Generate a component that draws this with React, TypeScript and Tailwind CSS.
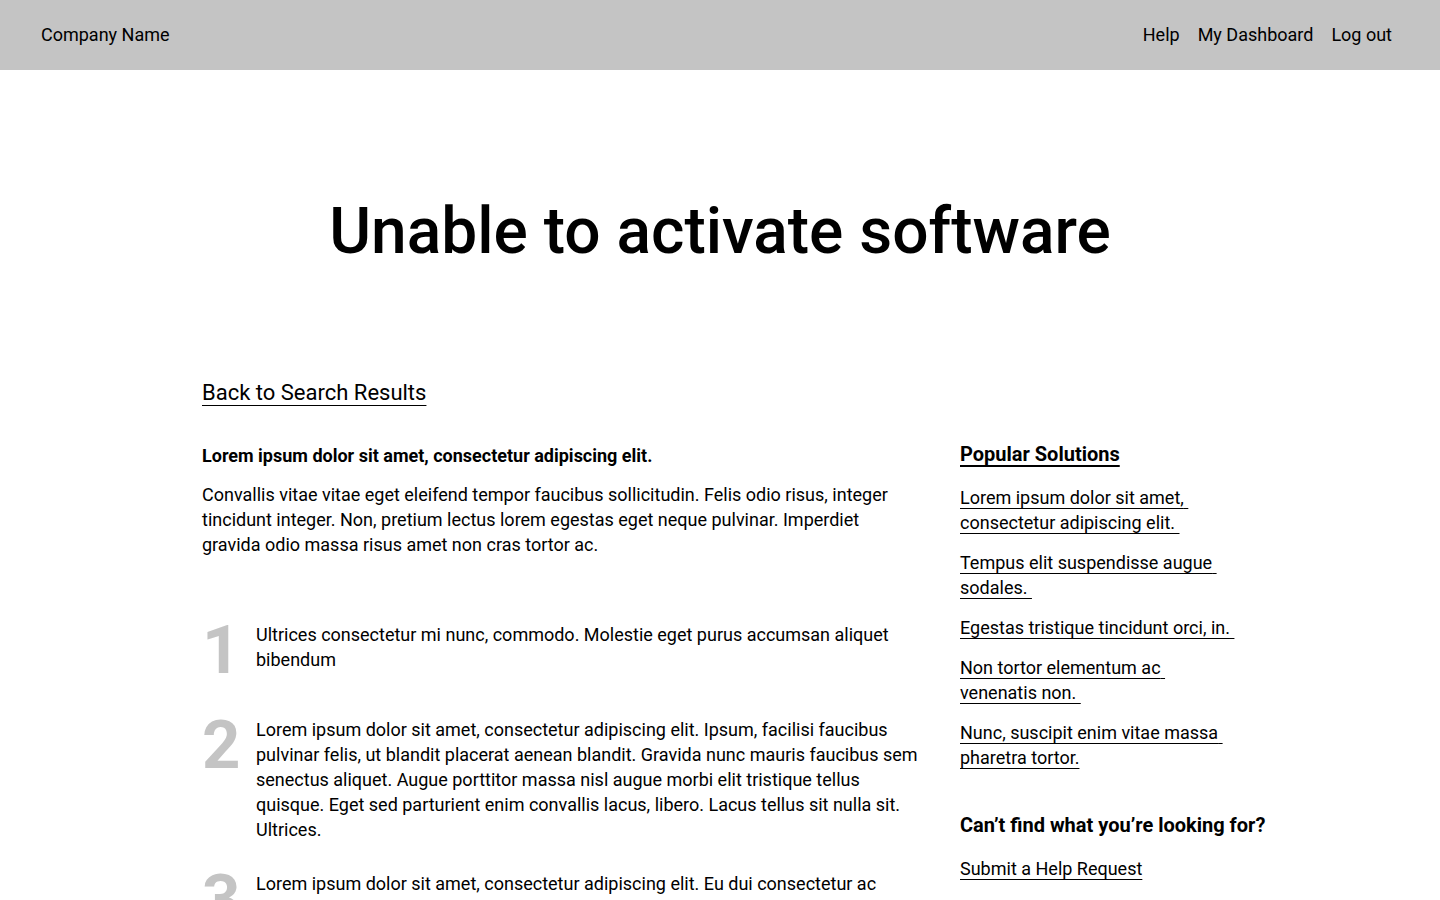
import React from 'react';

const popular = [
  'Lorem ipsum dolor sit amet, consectetur adipiscing elit. ',
  'Tempus elit suspendisse augue sodales. ',
  'Egestas tristique tincidunt orci, in. ',
  'Non tortor elementum ac venenatis non. ',
  'Nunc, suscipit enim vitae massa pharetra tortor.',
];

const steps = [
  'Ultrices consectetur mi nunc, commodo. Molestie eget purus accumsan aliquet bibendum',
  'Lorem ipsum dolor sit amet, consectetur adipiscing elit. Ipsum, facilisi faucibus pulvinar felis, ut blandit placerat aenean blandit. Gravida nunc mauris faucibus sem senectus aliquet. Augue porttitor massa nisl augue morbi elit tristique tellus quisque. Eget sed parturient enim convallis lacus, libero. Lacus tellus sit nulla sit. Ultrices.',
  'Lorem ipsum dolor sit amet, consectetur adipiscing elit. Eu dui consectetur ac tortor, dignissim mauris. Faucibus nunc gravida sed vitae amet lorem ipsum in.',
];

export default function App() {
  return (
    <div className="min-h-screen bg-white text-black font-['Roboto',sans-serif]">
      <header className="h-[70px] bg-[#c4c4c4] flex items-center justify-between pl-[41px] pr-[48px] pb-[2px] text-[18px]">
        <span>Company Name</span>
        <nav className="flex gap-[18px]">
          <a href="#">Help</a>
          <a href="#">My Dashboard</a>
          <a href="#">Log out</a>
        </nav>
      </header>

      <h1 className="text-center text-[64px] font-medium leading-none pt-[130px] pb-[112px]">
        Unable to activate software
      </h1>

      <div className="w-[1036px] mx-auto">
        <a href="#" className="text-[22px] underline decoration-1 underline-offset-[5px]">Back to Search Results</a>

        <div className="grid grid-cols-[718px_274px] gap-[40px] mt-[34px]">
          <main>
            <p className="font-bold text-[18px] leading-[25px]">Lorem ipsum dolor sit amet, consectetur adipiscing elit.</p>
            <p className="text-[18px] leading-[25px] mt-[14px]">
              Convallis vitae vitae eget eleifend tempor faucibus sollicitudin. Felis odio risus, integer tincidunt integer. Non, pretium lectus lorem egestas eget neque pulvinar. Imperdiet gravida odio massa risus amet non cras tortor ac.
            </p>

            <ol className="mt-[65px] flex flex-col gap-[29px]">
              {steps.map((s, i) => (
                <li key={i} className="flex items-start min-h-[66px]">
                  <span className="w-[54px] shrink-0 text-[67px] font-bold leading-none text-[#c4c4c4] -mt-[5px]">{i + 1}</span>
                  <p className="text-[18px] leading-[25px]">{s}</p>
                </li>
              ))}
            </ol>
          </main>

          <aside>
            <h2 className="font-bold text-[20px] leading-[25px] underline decoration-2 underline-offset-[4px] -mt-[1px]">Popular Solutions</h2>
            <ul className="mt-[18px] flex flex-col gap-[15px]">
              {popular.map((p) => (
                <li key={p} className="text-[18px] leading-[25px]">
                  <a href="#" className="underline decoration-1 underline-offset-[4px] whitespace-pre-wrap">{p}</a>
                </li>
              ))}
            </ul>
            <h3 className="font-bold text-[20px] leading-[25px] mt-[43px] whitespace-nowrap">Can’t find what you’re looking for?</h3>
            <a href="#" className="block mt-[18px] text-[18px] leading-[25px] underline decoration-1 underline-offset-[4px]">Submit a Help Request</a>
          </aside>
        </div>
      </div>
    </div>
  );
}
